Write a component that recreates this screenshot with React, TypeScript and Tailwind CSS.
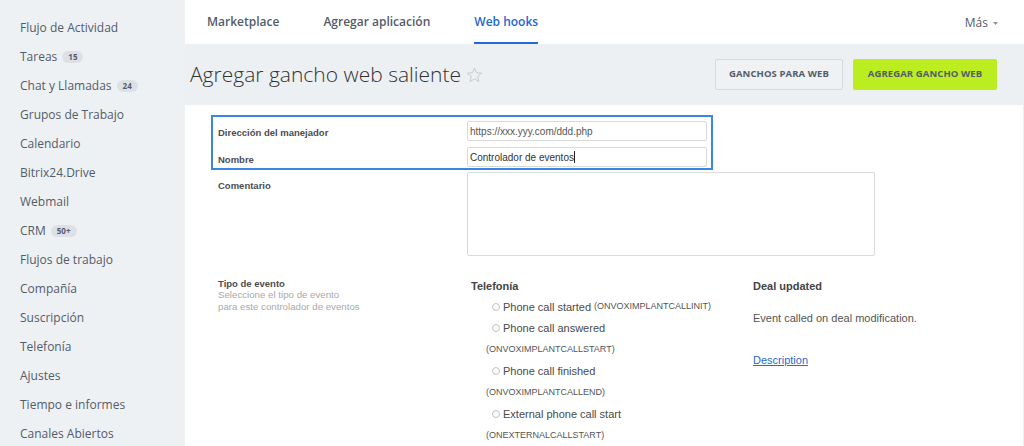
import React from "react";

const sidebarItems: { label: string; badge?: string }[] = [
  { label: "Flujo de Actividad" },
  { label: "Tareas", badge: "15" },
  { label: "Chat y Llamadas", badge: "24" },
  { label: "Grupos de Trabajo" },
  { label: "Calendario" },
  { label: "Bitrix24.Drive" },
  { label: "Webmail" },
  { label: "CRM", badge: "50+" },
  { label: "Flujos de trabajo" },
  { label: "Compañía" },
  { label: "Suscripción" },
  { label: "Telefonía" },
  { label: "Ajustes" },
  { label: "Tiempo e informes" },
  { label: "Canales Abiertos" },
];

function Radio() {
  return <span className="inline-block w-[8px] h-[8px] rounded-full border border-[#c4c4c4] bg-[#fafafa] mr-[3px] shrink-0" />;
}

export default function App() {
  return (
    <div className="flex w-[1024px] h-[446px] overflow-hidden">
      {/* Sidebar */}
      <aside className="w-[185px] shrink-0 bg-[#eef1f4] pt-[13px] pl-[20px] font-['Open_Sans',sans-serif] text-[12px] text-[#535c69]">
        {sidebarItems.map((it) => (
          <div key={it.label} className="h-[29px] flex items-center">
            <span>{it.label}</span>
            {it.badge && (
              <span className="ml-[5px] h-[12px] px-[6px] rounded-full bg-[#dde1e6] text-[8px] font-bold leading-[12px] text-[#535c69]">
                {it.badge}
              </span>
            )}
          </div>
        ))}
      </aside>

      {/* Main */}
      <div className="flex-1 flex flex-col bg-[#edf0f3] min-w-0">
        {/* Top nav */}
        <nav className="h-[44px] shrink-0 bg-white flex items-stretch pl-[22px] pr-[26px] gap-[44px] font-['Open_Sans',sans-serif] text-[12px] font-semibold text-[#535c69]">
          <div className="flex items-center border-b-2 border-transparent pt-[2px]">Marketplace</div>
          <div className="flex items-center border-b-2 border-transparent pt-[2px]">Agregar aplicación</div>
          <div className="flex items-center border-b-2 border-[#2467d6] text-[#2467d6] pt-[2px]">Web hooks</div>
          <div className="ml-auto flex items-center font-normal gap-[5px] pt-[2px]">
            <span>Más</span>
            <svg width="5" height="3" viewBox="0 0 5 3">
              <path d="M0 0 L5 0 L2.5 3 Z" fill="#8a9099" />
            </svg>
          </div>
        </nav>

        {/* Title row */}
        <div className="h-[61px] shrink-0 flex items-center pl-[5px] pr-[27px] font-['Open_Sans',sans-serif]">
          <h1 className="text-[21px] font-light text-[#333] leading-none">Agregar gancho web saliente</h1>
          <svg className="ml-[5px] mt-[1px]" width="17" height="16" viewBox="0 0 24 23">
            <path
              d="M12 1.5 L14.9 8.3 L22.2 8.9 L16.6 13.7 L18.3 20.9 L12 17.1 L5.7 20.9 L7.4 13.7 L1.8 8.9 L9.1 8.3 Z"
              fill="none"
              stroke="#c2c6cb"
              strokeWidth="1.3"
              strokeLinejoin="round"
            />
          </svg>
          <div className="ml-auto flex gap-[10px]">
            <button className="h-[31px] w-[128px] rounded-[2px] border border-[#d6dade] bg-[#eff1f3] text-[9.5px] font-bold text-[#535c69] tracking-[0.1px]">
              GANCHOS PARA WEB
            </button>
            <button className="h-[31px] w-[144px] rounded-[2px] bg-[#bbed21] text-[9.5px] font-bold text-[#535c69] tracking-[0.1px]">
              AGREGAR GANCHO WEB
            </button>
          </div>
        </div>

        {/* Content */}
        <div className="flex-1 bg-white mr-[1px] pt-[10px] font-['Liberation_Sans',Arial,sans-serif]">
          <div className="ml-[26px] w-[502px] border-2 border-[#3a86e2] pt-[4px] pb-[1px] pl-[5px] flex flex-col gap-[6px]">
            <div className="flex h-[20px]">
              <div className="w-[249px] pt-[6px] text-[9.5px] font-bold text-[#4d4d4d] leading-[12px]">Dirección del manejador</div>
              <div className="w-[240px] h-[20px] border border-[#d9d9d9] rounded-[2px] pl-[2px] flex items-center text-[10px] text-[#555]">
                https://xxx.yyy.com/ddd.php
              </div>
            </div>
            <div className="flex h-[20px]">
              <div className="w-[249px] pt-[7px] text-[9.5px] font-bold text-[#4d4d4d] leading-[12px]">Nombre</div>
              <div className="w-[240px] h-[20px] border border-[#d9d9d9] rounded-[2px] pl-[2px] flex items-center text-[10px] text-[#333]">
                Controlador de eventos
                <span className="inline-block w-px h-[12px] bg-[#222]" />
              </div>
            </div>
          </div>

          <div className="ml-[33px] mt-[2px] flex">
            <div className="w-[249px] pt-[8px] text-[9.5px] font-bold text-[#4d4d4d] leading-[12px]">Comentario</div>
            <div className="w-[408px] h-[84px] border border-[#dadada] rounded-[2px]" />
          </div>

          <div className="ml-[33px] mt-[22px] flex">
            <div className="w-[249px] pt-[1px]">
              <div className="text-[9.5px] font-bold text-[#4d4d4d] leading-[10px]">Tipo de evento</div>
              <div className="text-[9.7px] text-[#a9a9a9] leading-[12px]">Seleccione el tipo de evento</div>
              <div className="text-[9.7px] text-[#a9a9a9] leading-[12px]">para este controlador de eventos</div>
            </div>

            <div className="w-[286px] pt-[1px] text-[11px] text-[#4a4a4a]">
              <div className="pl-[4px] font-bold leading-[14px] text-[#444]">Telefonía</div>
              <div className="mt-[3px]">
                <div className="h-[21.5px] flex items-center pl-[25px]">
                  <Radio />
                  <span>Phone call started</span>
                  <span className="ml-[3px] text-[9px] text-[#555]">(ONVOXIMPLANTCALLINIT)</span>
                </div>
                <div className="h-[21.5px] flex items-center pl-[25px]">
                  <Radio />
                  <span>Phone call answered</span>
                </div>
                <div className="h-[21.5px] flex items-center pl-[19px] text-[9px] text-[#555]">(ONVOXIMPLANTCALLSTART)</div>
                <div className="h-[21.5px] flex items-center pl-[25px]">
                  <Radio />
                  <span>Phone call finished</span>
                </div>
                <div className="h-[21.5px] flex items-center pl-[19px] text-[9px] text-[#555]">(ONVOXIMPLANTCALLEND)</div>
                <div className="h-[21.5px] flex items-center pl-[25px]">
                  <Radio />
                  <span>External phone call start</span>
                </div>
                <div className="h-[21.5px] flex items-center pl-[19px] text-[9px] text-[#555]">(ONEXTERNALCALLSTART)</div>
              </div>
            </div>

            <div className="pt-[1px] text-[11px]">
              <div className="font-bold leading-[14px] text-[#444]">Deal updated</div>
              <div className="mt-[18px] leading-[14px] text-[#555]">Event called on deal modification.</div>
              <div className="mt-[28px] leading-[14px]">
                <a className="text-[#2a6ac8] underline">Description</a>
              </div>
            </div>
          </div>
        </div>
      </div>
    </div>
  );
}
